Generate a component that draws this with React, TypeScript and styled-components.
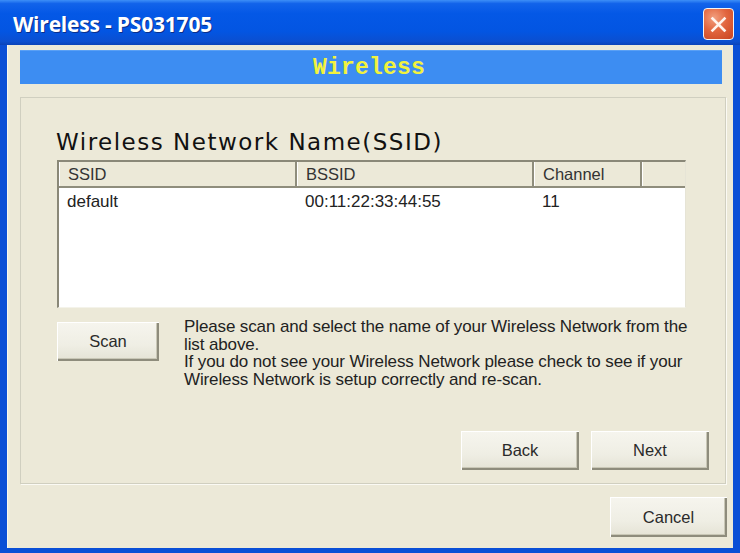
import React from 'react';
import styled, { createGlobalStyle } from 'styled-components';

const GlobalStyle = createGlobalStyle`
	html, body {
		margin: 0;
		padding: 0;
		background: #ffffff;
	}
	* {
		box-sizing: border-box;
	}
`;

const face = '#ece9d8';
const uiFont = `'Liberation Sans', Arial, sans-serif`;

const Window = styled.div`
	width: 740px;
	height: 553px;
	display: flex;
	flex-direction: column;
	background: #0a4fd6;
	overflow: hidden;
`;

const TitleBar = styled.div`
	height: 45px;
	flex: none;
	display: flex;
	align-items: center;
	justify-content: space-between;
	padding: 0 6px 0 13px;
	background: linear-gradient(
		to bottom,
		#3d8ff7 0%,
		#1263ea 8%,
		#0458e6 30%,
		#0355e2 70%,
		#0b4fd0 92%,
		#0a43b8 100%
	);
`;

const TitleText = styled.span`
	font-family: 'Open Sans', 'DejaVu Sans', sans-serif;
	font-weight: 700;
	font-size: 21px;
	letter-spacing: -0.2px;
	color: #ffffff;
	text-shadow: 1px 1px 0 #0a2f8a;
	margin-top: 3px;
`;

const CloseButton = styled.div`
	width: 31px;
	height: 32px;
	margin-top: 3px;
	border: 1px solid #f4f4f4;
	border-radius: 4px;
	background: radial-gradient(circle at 35% 30%, #f2a080 0%, #e2663f 45%, #c8431f 100%);
	display: flex;
	align-items: center;
	justify-content: center;
`;

const Body = styled.div`
	flex: 1;
	display: flex;
	flex-direction: column;
	margin: 0 7px 5px 7px;
	padding: 5px 10px 11px 13px;
	background: ${face};
	box-shadow: inset 1px 0 0 #f8f7f0;
`;

const Banner = styled.div`
	height: 34px;
	margin-right: 1px;
	display: flex;
	align-items: center;
	justify-content: center;
	background: #3d8df2;
	border-top: 1px solid #5aa0f5;
	font-family: 'Liberation Mono', 'DejaVu Sans Mono', monospace;
	font-weight: 700;
	font-size: 23px;
	color: #f2f23c;
	letter-spacing: 0.2px;
	padding-right: 4px;
`;

const GroupBox = styled.div`
	margin-top: 13px;
	margin-right: -3px;
	height: 387px;
	display: flex;
	flex-direction: column;
	padding: 0 13px 13px 36px;
	border: 1px solid #d0cfc0;
	box-shadow: 1px 1px 0 #fbfaf4;
`;

const Heading = styled.h1`
	margin: 28px 0 0 -1px;
	height: 34px;
	font-family: 'DejaVu Sans', Verdana, sans-serif;
	font-weight: 400;
	font-size: 23px;
	line-height: 32px;
	color: #111111;
	letter-spacing: 1.5px;
	white-space: nowrap;
`;

const ListView = styled.div`
	width: 629px;
	height: 148px;
	display: flex;
	flex-direction: column;
	background: #ffffff;
	border-top: 2px solid #8a8878;
	border-left: 2px solid #8a8878;
	border-right: 1px solid #e6e4d6;
	border-bottom: 1px solid #f4f3ea;
`;

const HeaderRow = styled.div`
	display: flex;
	height: 26px;
	background: ${face};
	border-bottom: 2px solid #8f8d7c;
`;

const HeaderCell = styled.div<{ $w: number }>`
	width: ${p => p.$w}px;
	flex: none;
	display: flex;
	align-items: center;
	padding-left: 9px;
	border-right: 2px solid #8f8d7c;
	box-shadow: inset 1px 0 0 #ffffff;
	font-family: ${uiFont};
	font-size: 16.5px;
	color: #333333;

	&:last-child {
		flex: 1;
		border-right: none;
	}
`;

const DataRow = styled.div`
	display: flex;
	height: 28px;
	align-items: center;
`;

const DataCell = styled.div<{ $w: number }>`
	width: ${p => p.$w}px;
	flex: none;
	padding-left: 8px;
	font-family: ${uiFont};
	font-size: 17px;
	color: #222222;
`;

const ScanRow = styled.div`
	display: flex;
	align-items: flex-start;
	gap: 25px;
	margin-top: 14px;
`;

const Button = styled.div<{ $w: number }>`
	width: ${p => p.$w}px;
	height: 39px;
	flex: none;
	display: flex;
	align-items: center;
	justify-content: center;
	background: linear-gradient(to bottom, #f6f5ee 0%, #efeee4 60%, #e4e2d4 100%);
	box-shadow:
		inset 1px 1px 0 #ffffff,
		inset -2px -2px 0 #8e8c7c,
		inset -3px -3px 0 #c9c7b6;
	font-family: ${uiFont};
	font-size: 16.5px;
	color: #2a2a2a;
`;

const Description = styled.p`
	margin: -4px 0 0 0;
	width: 515px;
	font-family: ${uiFont};
	font-size: 17px;
	line-height: 17.6px;
	letter-spacing: -0.12px;
	color: #222222;
`;

const NavRow = styled.div`
	display: flex;
	justify-content: flex-end;
	gap: 12px;
	margin-top: auto;
	margin-right: 3px;
`;

const Footer = styled.div`
	display: flex;
	justify-content: flex-end;
	margin-top: 13px;
	margin-right: -4px;
`;

const columns = [
	{ title: 'SSID', width: 238 },
	{ title: 'BSSID', width: 237 },
	{ title: 'Channel', width: 108 },
	{ title: '', width: 44 },
];

const networks = [{ ssid: 'default', bssid: '00:11:22:33:44:55', channel: '11' }];

export default function App() {
	return (
		<>
			<GlobalStyle />
			<Window>
				<TitleBar>
					<TitleText>Wireless - PS031705</TitleText>
					<CloseButton>
						<svg width="19" height="19" viewBox="0 0 19 19">
							<path d="M3.5 3.5 L15.5 15.5 M15.5 3.5 L3.5 15.5" stroke="#fff4ee" strokeWidth="2.6" strokeLinecap="square" />
						</svg>
					</CloseButton>
				</TitleBar>
				<Body>
					<Banner>Wireless</Banner>
					<GroupBox>
						<Heading>Wireless Network Name(SSID)</Heading>
						<ListView>
							<HeaderRow>
								{columns.map(c => (
									<HeaderCell key={c.title || 'pad'} $w={c.width}>
										{c.title}
									</HeaderCell>
								))}
							</HeaderRow>
							{networks.map(n => (
								<DataRow key={n.bssid}>
									<DataCell $w={238}>{n.ssid}</DataCell>
									<DataCell $w={237}>{n.bssid}</DataCell>
									<DataCell $w={108}>{n.channel}</DataCell>
								</DataRow>
							))}
						</ListView>
						<ScanRow>
							<Button $w={102}>Scan</Button>
							<Description>
								Please scan and select the name of your Wireless Network from the list above.
								<br />
								If you do not see your Wireless Network please check to see if your Wireless
								Network is setup correctly and re-scan.
							</Description>
						</ScanRow>
						<NavRow>
							<Button $w={118}>Back</Button>
							<Button $w={118}>Next</Button>
						</NavRow>
					</GroupBox>
					<Footer>
						<Button $w={117} style={{ height: 40 }}>
							Cancel
						</Button>
					</Footer>
				</Body>
			</Window>
		</>
	);
}
